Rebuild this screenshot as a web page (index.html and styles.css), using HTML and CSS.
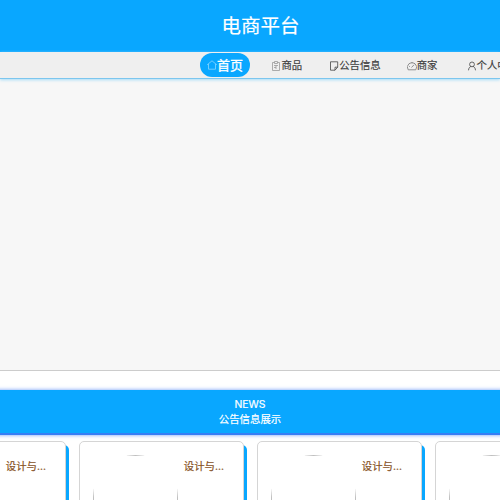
FILE: index.html
```
<!DOCTYPE html>
<html lang="zh">
<head>
<meta charset="utf-8">
<title>电商平台</title>
<link rel="stylesheet" href="styles.css">
</head>
<body>
<header class="header">电商平台</header>
<nav class="nav">
  <a class="item active"><svg class="icon" viewBox="0 0 10 10"><path d="M.2 4.800 5 .8l4.800 4M1.500 4v5.200h7V4"/></svg>首页</a>
  <a class="item goods"><svg class="icon light" viewBox="0 0 10 10"><path d="M3.500 1.500h-2v8h7v-8h-2M3.500.5h3v2h-3zM3 4.500h4M3 6.500h2M5 4.500v3.500"/></svg>商品</a>
  <a class="item notice"><svg class="icon dark" viewBox="0 0 10 10"><path d="M1.500 .8h7.200v5.400L6 9.200H1.500zM8.700 6.200H6v3"/></svg>公告信息</a>
  <a class="item shop"><svg class="icon" viewBox="0 0 10 10"><path d="M1.200 8.800a4.600 4.600 0 1 1 7.600 0zM4.500 6.500l2.500-2.700M2 5.500h.8M5 2v.6"/></svg>商家</a>
  <a class="item user"><svg class="icon dark" viewBox="0 0 10 10"><circle cx="5" cy="3.400" r="2.400"/><path d="M1.500 9.300c.2-2.300 1.200-3.600 2.700-3.900M5.800 5.400c1.500.3 2.500 1.600 2.700 3.900"/></svg>个人中心</a>
</nav>
<div class="carousel"></div>
<section class="band"><div>NEWS</div><div>公告信息展示</div></section>
<main class="cards">
  <article class="card"><div class="photo"><div class="frame"></div></div><div class="title">设计与...</div></article>
  <article class="card"><div class="photo"><div class="frame"></div></div><div class="title">设计与...</div></article>
  <article class="card"><div class="photo"><div class="frame"></div></div><div class="title">设计与...</div></article>
  <article class="card"><div class="photo"><div class="frame"></div></div><div class="title">设计与...</div></article>
</main>
</body>
</html>
```
FILE: styles.css
```
* { box-sizing: border-box; }
body {
  margin: 0;
  height: 500px;
  overflow: hidden;
  background: #fff;
  font-family: Inter, "Noto Sans CJK SC", sans-serif;
}
.header {
  height: 52px;
  line-height: 53px;
  background: #09a7ff;
  color: #fff;
  font-size: 19.5px;
  text-align: center;
  padding-left: 21px;
  -webkit-text-stroke: .2px;
}
.nav {
  position: relative;
  display: flex;
  align-items: flex-start;
  height: 27px;
  padding: 1px 0 0 200.4px;
  overflow-x: clip;
  background: #efefef;
  border-bottom: 1px solid #7cc6ee;
  box-shadow: 0 1px 3px #a5dcf8;
}
.item {
  display: flex;
  align-items: center;
  flex: none;
  height: 25px;
  font-size: 10.4px;
  line-height: 15px;
  color: #3c3c3c;
  white-space: nowrap;
  -webkit-text-stroke: .15px;
}
.icon {
  width: 10px;
  height: 10px;
  flex: none;
  fill: none;
  stroke: #777;
  stroke-width: .8;
}
.light { stroke: #999; }
.dark { stroke: #444; }
.active {
  width: 50px;
  height: 24px;
  padding-left: 6.500px;
  border-radius: 12px;
  background: #09a7ff;
  color: #fff;
  font-size: 13px;
  line-height: 16px;
  -webkit-text-stroke: .3px;
}
.active .icon { stroke: #8cd7ff; }
.goods { margin-left: 21px; }
.notice { margin-left: 27px; }
.shop { margin-left: 26px; }
.user { margin-left: 29px; }
.carousel {
  height: 292px;
  background: #f7f7f7;
  border-bottom: 1px solid #ccc;
}
.band {
  height: 45px;
  margin: 19px -10px 0;
  padding: 8px 0 0;
  background: #09a7ff;
  border-bottom: 2px solid #367df5;
  box-shadow: 0 0 4px #6f9cf8;
  color: #fff;
  font-size: 10.4px;
  line-height: 14.500px;
  text-align: center;
  -webkit-text-stroke: .2px;
}
.cards {
  display: flex;
  gap: 13px;
  margin: 6px 0 0 -98.700px;
}
.card {
  display: flex;
  flex: none;
  width: 165px;
  height: 140px;
  padding: 13px 0 0 13px;
  background: #fff;
  border: 1px solid #d5d5d5;
  border-radius: 5px;
  box-shadow: 3px 4px 0 #09a7ff;
}
.photo {
  width: 85px;
  height: 85px;
  border-radius: 50%;
  overflow: hidden;
}
.frame {
  height: 100%;
  border: 1px solid #c0c0c0;
}
.title {
  margin: 4px 0 0 5.500px;
  color: #85501c;
  font-size: 10.4px;
  line-height: 15px;
  -webkit-text-stroke: .2px;
}
```
